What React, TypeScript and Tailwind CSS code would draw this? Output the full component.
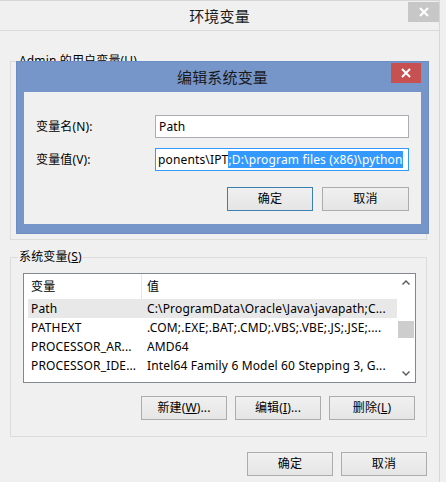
import React from "react";

const font = "font-['Noto_Sans','Noto_Sans_CJK_SC',sans-serif] tracking-[0.15px]";

type BtnProps = {
  children: React.ReactNode;
  focus?: boolean;
  w?: string;
};

function Btn({ children, focus, w }: BtnProps) {
  return (
    <div
      className={`flex h-[24px] ${w ?? "w-[86px]"} items-center justify-center border ${
        focus ? "border-[#3c7fb1]" : "border-[#acacac]"
      } bg-linear-to-b from-[#f0f0f0] to-[#e5e5e5] text-[12px] text-black`}
    >
      {children}
    </div>
  );
}

const rows = [
  ["Path", "C:\\ProgramData\\Oracle\\Java\\javapath;C..."],
  ["PATHEXT", ".COM;.EXE;.BAT;.CMD;.VBS;.VBE;.JS;.JSE;...."],
  ["PROCESSOR_AR...", "AMD64"],
  ["PROCESSOR_IDE...", "Intel64 Family 6 Model 60 Stepping 3, G..."],
];

function EditDialog() {
  return (
    <div className="absolute left-[16px] top-[60px] flex h-[173px] w-[413px] flex-col border border-[#6d8dc3] bg-[#7695c9] px-[7px]">
      <div className="flex h-[30px] items-start">
        <div className="w-[30px]" />
        <div className="flex h-[30px] flex-1 items-center justify-center text-[15px] text-[#1a1a1a]">
          编辑系统变量
        </div>
        <div className="mt-[1px] flex h-[20px] w-[30px] items-center justify-center bg-[#c75050]">
          <svg width="10" height="10" viewBox="0 0 10 10">
            <path d="M1 1L9 9M9 1L1 9" stroke="#fff" strokeWidth="2" />
          </svg>
        </div>
      </div>
      <div className="flex h-[132px] flex-col bg-[#f0f0f0] pl-[12px] pr-[12px] pt-[23px]">
        <div className="flex h-[23px] items-center">
          <div className="w-[119px] text-[12px] text-black">变量名(N):</div>
          <div className="flex h-[23px] flex-1 items-center border border-[#abadb3] bg-white pl-[3px] text-[12px] text-black">
            Path
          </div>
        </div>
        <div className="mt-[10px] flex h-[23px] items-center">
          <div className="w-[119px] text-[12px] text-black">变量值(V):</div>
          <div className="flex h-[23px] flex-1 items-center overflow-hidden whitespace-nowrap border border-[#3399ff] bg-white pl-[2px] text-[12px] text-black">
            <span>ponents\IPT</span>
            <span className="bg-[#3399ff] leading-[17px] text-white">;D:\program files (x86)\python</span>
          </div>
        </div>
        <div className="mt-[16px] flex justify-end gap-[9px]">
          <Btn focus>确定</Btn>
          <Btn w="w-[87px]">取消</Btn>
        </div>
      </div>
    </div>
  );
}

export default function App() {
  return (
    <div className={`${font} flex h-[482px] w-[446px] bg-[#f0f0f0] text-black`}>
      <div className="relative flex h-full w-[440px] flex-col border-r border-t border-[#d7d7d7]">
        <div className="flex h-[30px] items-start border-b border-[#dadada]">
          <div className="w-[31px]" />
          <div className="flex h-[30px] flex-1 items-center justify-center text-[15px] text-[#1a1a1a]">
            环境变量
          </div>
          <div className="mt-[1px] flex h-[20px] w-[31px] items-center justify-center bg-[#c7c7c7]">
            <svg width="10" height="10" viewBox="0 0 10 10">
              <path d="M1 1L9 9M9 1L1 9" stroke="#fff" strokeWidth="2" />
            </svg>
          </div>
        </div>

        <div className="flex flex-col pl-[10px] pr-[12px]">
          <fieldset className="mt-[22px] h-[187px] border border-[#dcdcdc]">
            <legend className="ml-[7px] px-[1px] text-[12px] leading-[16px]">
              Admin 的用户变量(<span className="underline">U</span>)
            </legend>
          </fieldset>

          <fieldset className="mt-[9px] h-[188px] border border-[#dcdcdc]">
            <legend className="ml-[7px] px-[1px] text-[12px] leading-[16px]">
              系统变量(<span className="underline">S</span>)
            </legend>
            <div className="flex flex-col pl-[12px] pr-[10px] pt-[8px]">
              <div className="flex h-[110px] border border-[#828790] bg-white">
                <div className="flex flex-1 flex-col text-[12px]">
                  <div className="flex h-[25px] items-stretch">
                    <div className="flex w-[118px] items-center border-r border-[#e5e5e5] pl-[7px]">变量</div>
                    <div className="flex items-center pl-[5px]">值</div>
                  </div>
                  <div className="flex flex-col pl-[4px]">
                    {rows.map(([name, value], i) => (
                      <div
                        key={name}
                        className={`flex h-[19px] items-center whitespace-nowrap ${
                          i === 0 ? "bg-[#e8e8e8]" : ""
                        }`}
                      >
                        <div className="w-[119px] overflow-hidden pl-[3px]">{name}</div>
                        <div className="flex-1 overflow-hidden">{value}</div>
                      </div>
                    ))}
                  </div>
                </div>
                <div className="flex w-[18px] flex-col">
                  <div className="flex h-[17px] items-center justify-center">
                    <svg width="8" height="5" viewBox="0 0 8 5">
                      <path d="M0.5 4.5L4 1L7.5 4.5" stroke="#606060" strokeWidth="1.5" fill="none" />
                    </svg>
                  </div>
                  <div className="flex flex-1 flex-col px-[1px]">
                    <div className="mt-[30px] h-[17px] bg-[#cdcdcd]" />
                  </div>
                  <div className="flex h-[17px] items-center justify-center">
                    <svg width="8" height="5" viewBox="0 0 8 5">
                      <path d="M0.5 0.5L4 4L7.5 0.5" stroke="#606060" strokeWidth="1.5" fill="none" />
                    </svg>
                  </div>
                </div>
              </div>
              <div className="mt-[13px] flex justify-end gap-[8px] pr-[1px]">
                <Btn>
                  新建(<span className="underline">W</span>)...
                </Btn>
                <Btn>
                  编辑(<span className="underline">I</span>)...
                </Btn>
                <Btn>
                  删除(<span className="underline">L</span>)
                </Btn>
              </div>
            </div>
          </fieldset>

          <div className="mt-[15px] flex justify-end gap-[8px]">
            <Btn>确定</Btn>
            <Btn>取消</Btn>
          </div>
        </div>

        <EditDialog />
      </div>
      <div className="h-full flex-1 bg-[#f0f0f0]" />
    </div>
  );
}
